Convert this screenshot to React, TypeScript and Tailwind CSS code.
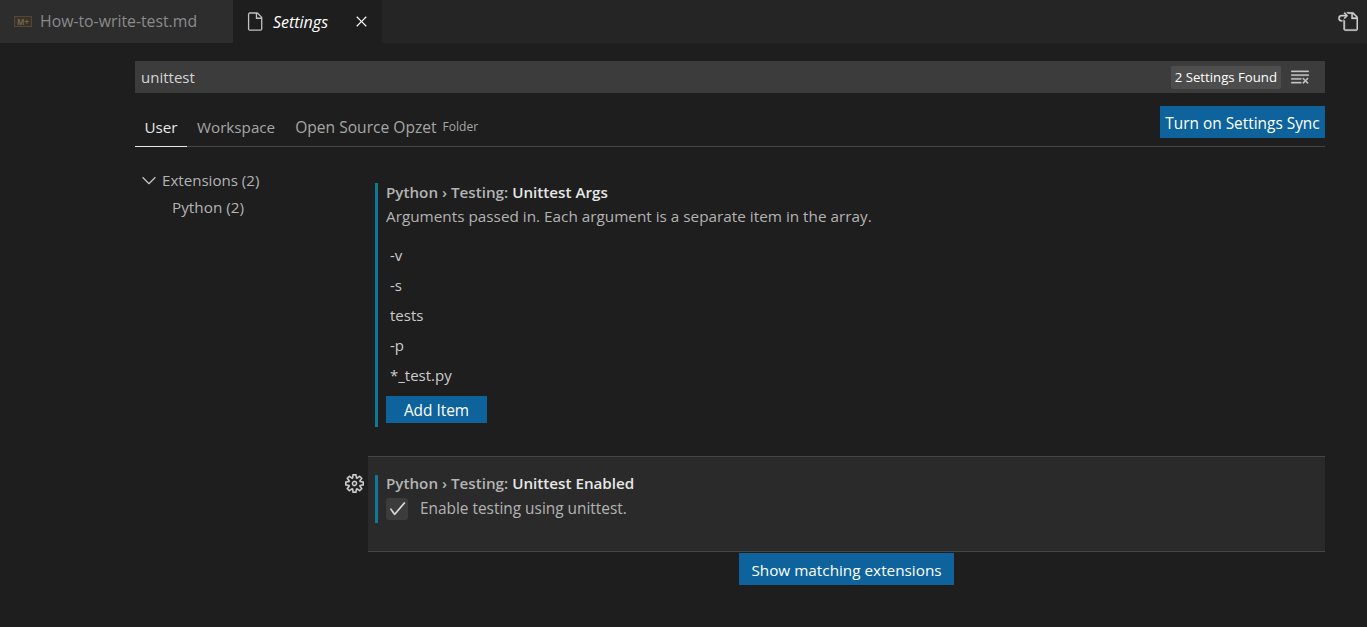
import { VscCheck, VscChevronDown, VscClearAll, VscClose, VscFile, VscGoToFile, VscSettingsGear } from "react-icons/vsc";

const items = ["-v", "-s", "tests", "-p", "*_test.py"];

export default function App() {
  return (
    <div className="h-[627px] w-full overflow-hidden bg-[#1e1e1e] font-['Open_Sans','Noto_Sans',sans-serif] text-[15px] text-[#cccccc]">
      <div className="flex h-[43px] items-center bg-[#252526]">
        <div className="flex h-full w-[233px] items-center bg-[#2d2d2d] pl-[14px] text-[#8a8a8a]">
          <span className="flex h-[11px] w-[18px] items-center justify-center border border-[#54463a] bg-[#3a3129] text-[8px] leading-none font-bold text-[#75634e]">
            M+
          </span>
          <span className="ml-[8px] text-[15.8px]">How-to-write-test.md</span>
        </div>
        <div className="flex h-full w-[149px] items-center bg-[#1e1e1e] pl-[11px] text-white">
          <VscFile size={21} className="text-[#c0c0c0]" />
          <span className="ml-[8px] text-[16px] italic">Settings</span>
          <VscClose size={19} className="ml-[24px] text-white" />
        </div>
        <div className="ml-auto mr-[9px] flex">
          <VscGoToFile size={21} stroke="currentColor" strokeWidth={0.3} className="text-[#d0d0d0]" />
        </div>
      </div>

      <div className="ml-[135px] w-[1190px] pt-[18px]">
        <div className="flex h-[32px] items-center justify-between bg-[#3c3c3c] pl-[6px] pr-[15px] text-[15px] text-[#d4d4d4]">
          <span>unittest</span>
          <div className="flex items-center gap-[9px]">
            <span className="flex h-[23px] items-center rounded-[2px] bg-[#4d4d4d] px-[4px] pt-[1px] text-[13.2px] text-white">
              2 Settings Found
            </span>
            <VscClearAll size={20} stroke="currentColor" strokeWidth={0.3} className="text-[#c5c5c5]" />
          </div>
        </div>

        <div className="mt-[13px] flex h-[41px] items-start justify-between border-b border-[#454545]">
          <div className="flex h-[41px] items-center text-[15.2px] text-[#a6a6a6]">
            <span className="flex h-[41px] w-[52px] items-center justify-center border-b border-[#e7e7e7] pt-[2px] text-[#e7e7e7]">
              User
            </span>
            <span className="ml-[10px] pt-[1px]">Workspace</span>
            <span className="ml-[20px] pt-[2px] text-[15.6px]">Open Source Opzet</span>
            <span className="ml-[6px] text-[12px]">Folder</span>
          </div>
          <button className="h-[32px] w-[165px] bg-[#0e639c] pt-[3px] text-[15.4px] leading-[20px] text-white">Turn on Settings Sync</button>
        </div>

        <div className="flex">
          <div className="w-[209px] pt-[23px] text-[15.1px] text-[#b3b3b3]">
            <div className="flex h-[20px] items-center pl-[3px]">
              <VscChevronDown size={22} className="text-[#c5c5c5]" />
              <span className="ml-[2px]">Extensions (2)</span>
            </div>
            <div className="mt-[7px] flex h-[20px] items-center pl-[37px] text-[15.3px]">Python (2)</div>
          </div>

          <div className="w-[24px] pt-[327px]">
            <VscSettingsGear size={19} stroke="currentColor" strokeWidth={0.3} className="ml-[1px] text-[#d0d0d0]" />
          </div>

          <div className="w-[957px] pt-[36px]">
            <div className="ml-[7px] flow-root h-[244px] border-l-[3px] border-[#0f7a96] pl-[8px]">
              <div className="-mt-[1px] text-[15.2px] leading-[20px] font-semibold text-[#b4b4b4]">
                Python › Testing: <span className="text-[#e7e7e7]">Unittest Args</span>
              </div>
              <div className="mt-[4px] text-[15.3px] leading-[20px] text-[#b3b3b3]">
                Arguments passed in. Each argument is a separate item in the array.
              </div>
              <div className="mt-[14px]">
                {items.map((item) => (
                  <div key={item} className="flex h-[30px] items-center pl-[4px] text-[15px] text-[#cccccc]">
                    {item}
                  </div>
                ))}
              </div>
              <button className="mt-[6px] h-[27px] w-[101px] bg-[#0e639c] pt-[3px] text-[15.4px] leading-[20px] text-white">Add Item</button>
            </div>

            <div className="mt-[29px] h-[96px] border-y border-[#454545] bg-[#2a2a2a] pt-[18px]">
              <div className="ml-[7px] flow-root h-[48px] border-l-[3px] border-[#0f7a96] pl-[8px]">
                <div className="-mt-[2px] text-[15.2px] leading-[20px] font-semibold text-[#b4b4b4]">
                  Python › Testing: <span className="text-[#e7e7e7]">Unittest Enabled</span>
                </div>
                <div className="mt-[4px] flex items-center text-[15.4px] text-[#b3b3b3]">
                  <span className="flex h-[22px] w-[22px] items-center justify-center rounded-[3px] bg-[#3c3c3c]">
                    <VscCheck size={19} stroke="currentColor" strokeWidth={0.4} className="text-[#e8e8e8]" />
                  </span>
                  <span className="ml-[12px]">Enable testing using unittest.</span>
                </div>
              </div>
            </div>

            <div className="mt-[1px] flex justify-center">
              <button className="h-[32px] w-[215px] bg-[#0e639c] pt-[2px] text-[15.3px] leading-[20px] text-white">Show matching extensions</button>
            </div>
          </div>
        </div>
      </div>
    </div>
  );
}
